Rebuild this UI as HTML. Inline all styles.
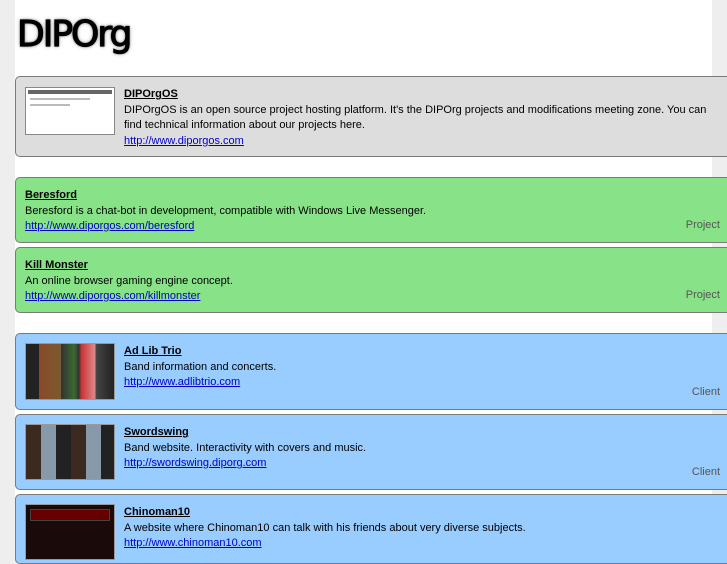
<!DOCTYPE html>
<html><head><style>
body{margin:0;width:727px;height:545px;overflow:hidden;background:#eee;font-family:"Liberation Sans",sans-serif;font-size:11px;color:#000;position:relative}
#main{position:absolute;left:15px;top:0;width:697px;height:545px;background:#fff}
.logo{position:absolute;left:17px;top:14px;font-size:36px;font-family:"DejaVu Sans",sans-serif;letter-spacing:-2px;color:#000;text-shadow:0 0 2px #555,0 0 4px #999;font-weight:normal;-webkit-text-stroke:1.2px #000}
.box{position:absolute;left:15px;width:730px;border:1px solid #7a7a7a;border-radius:5px;box-sizing:border-box}
.g{background:#ddd}.gr{background:#88e388}.b{background:#99ccff}
.t{position:absolute;line-height:15.5px}
.t b{text-decoration:underline}
a{color:#00c;text-decoration:underline}
.thumb{position:absolute;left:9px;width:90px;border:1px solid #999;box-sizing:border-box}
.tag{position:absolute;right:24px;color:#555}
</style></head><body>
<div id="main"></div>
<div class="logo">DIPOrg</div>
<div class="box g" style="top:76px;height:81px">
 <div class="thumb" style="top:10px;height:48px;background:#fff;border-color:#888"><div style="height:4px;background:#666;margin:2px"></div><div style="margin:4px;height:2px;background:#bbb;width:60px"></div><div style="margin:4px;height:2px;background:#bbb;width:40px"></div></div>
 <div class="t" style="left:108px;top:10px"><b>DIPOrgOS</b><br>DIPOrgOS is an open source project hosting platform. It's the DIPOrg projects and modifications meeting zone. You can<br>find technical information about our projects here.<br><a>http://www.diporgos.com</a></div>
</div>
<div class="box gr" style="top:177px;height:66px">
 <div class="t" style="left:9px;top:10px"><b>Beresford</b><br>Beresford is a chat-bot in development, compatible with Windows Live Messenger.<br><a>http://www.diporgos.com/beresford</a></div>
 <div class="tag" style="top:41px">Project</div>
</div>
<div class="box gr" style="top:247px;height:66px">
 <div class="t" style="left:9px;top:10px"><b>Kill Monster</b><br>An online browser gaming engine concept.<br><a>http://www.diporgos.com/killmonster</a></div>
 <div class="tag" style="top:41px">Project</div>
</div>
<div class="box b" style="top:333px;height:77px">
 <div class="thumb" style="top:9px;height:57px;background:linear-gradient(90deg,#222 0,#222 15%,#8a4a2a 15%,#7a5a30 40%,#333 40%,#3a6a30 55%,#333 60%,#c33 63%,#d88 78%,#444 80%,#222)"></div>
 <div class="t" style="left:108px;top:10px"><b>Ad Lib Trio</b><br>Band information and concerts.<br><a>http://www.adlibtrio.com</a></div>
 <div class="tag" style="top:52px">Client</div>
</div>
<div class="box b" style="top:414px;height:76px">
 <div class="thumb" style="top:9px;height:56px;background:repeating-linear-gradient(90deg,#3a2a20 0 15px,#8899aa 15px 30px,#222 30px 45px),#333"></div>
 <div class="t" style="left:108px;top:10px"><b>Swordswing</b><br>Band website. Interactivity with covers and music.<br><a>http://swordswing.diporg.com</a></div>
 <div class="tag" style="top:51px">Client</div>
</div>
<div class="box b" style="top:494px;height:70px">
 <div class="thumb" style="top:9px;height:56px;background:#1a0a0a"><div style="margin:4px;height:10px;background:#600;border:1px solid #444"></div></div>
 <div class="t" style="left:108px;top:10px"><b>Chinoman10</b><br>A website where Chinoman10 can talk with his friends about very diverse subjects.<br><a>http://www.chinoman10.com</a></div>
</div>
</body></html>
